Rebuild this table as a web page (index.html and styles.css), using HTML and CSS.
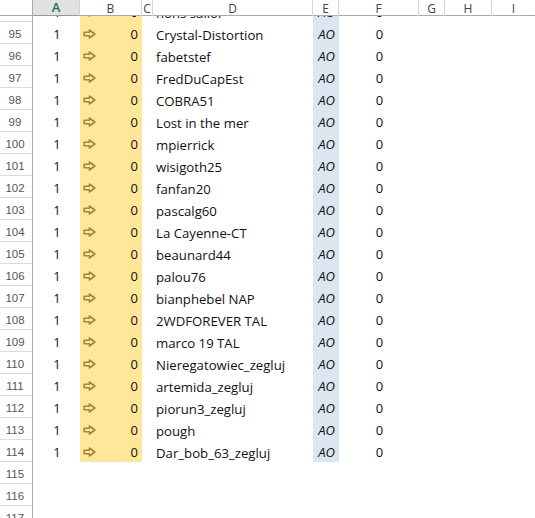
FILE: index.html
```html
<!DOCTYPE html>
<html>
<head>
<meta charset="utf-8">
<link rel="stylesheet" href="styles.css">
</head>
<body>
<svg width="0" height="0" class="defs">
  <symbol id="arr" viewBox="0 0 13 10">
    <path d="M1.2 3.2 H6.4 V1 L11.8 5 L6.4 9 V6.8 H1.2 Z" fill="none" stroke="currentColor" stroke-width="1.6" stroke-linejoin="round"/>
  </symbol>
</svg>
<div class="sheet">
  <div class="colhead">
    <div class="ch corner"></div>
    <div class="ch sel">A</div>
    <div class="ch">B</div>
    <div class="ch">C</div>
    <div class="ch">D</div>
    <div class="ch">E</div>
    <div class="ch">F</div>
    <div class="ch">G</div>
    <div class="ch">H</div>
    <div class="ch last">I</div>
  </div>
  <div class="viewport">
    <div class="rows">
      <div class="row"><div class="rh">94</div><div class="a">1</div><div class="b"><svg class="ic"><use href="#arr"/></svg><span>0</span></div><div class="c"></div><div class="d">hons sailor</div><div class="e">AO</div><div class="f">0</div></div>
      <div class="row"><div class="rh">95</div><div class="a">1</div><div class="b"><svg class="ic"><use href="#arr"/></svg><span>0</span></div><div class="c"></div><div class="d">Crystal-Distortion</div><div class="e">AO</div><div class="f">0</div></div>
      <div class="row"><div class="rh">96</div><div class="a">1</div><div class="b"><svg class="ic"><use href="#arr"/></svg><span>0</span></div><div class="c"></div><div class="d">fabetstef</div><div class="e">AO</div><div class="f">0</div></div>
      <div class="row"><div class="rh">97</div><div class="a">1</div><div class="b"><svg class="ic"><use href="#arr"/></svg><span>0</span></div><div class="c"></div><div class="d">FredDuCapEst</div><div class="e">AO</div><div class="f">0</div></div>
      <div class="row"><div class="rh">98</div><div class="a">1</div><div class="b"><svg class="ic"><use href="#arr"/></svg><span>0</span></div><div class="c"></div><div class="d">COBRA51</div><div class="e">AO</div><div class="f">0</div></div>
      <div class="row"><div class="rh">99</div><div class="a">1</div><div class="b"><svg class="ic"><use href="#arr"/></svg><span>0</span></div><div class="c"></div><div class="d">Lost in the mer</div><div class="e">AO</div><div class="f">0</div></div>
      <div class="row"><div class="rh">100</div><div class="a">1</div><div class="b"><svg class="ic"><use href="#arr"/></svg><span>0</span></div><div class="c"></div><div class="d">mpierrick</div><div class="e">AO</div><div class="f">0</div></div>
      <div class="row"><div class="rh">101</div><div class="a">1</div><div class="b"><svg class="ic"><use href="#arr"/></svg><span>0</span></div><div class="c"></div><div class="d">wisigoth25</div><div class="e">AO</div><div class="f">0</div></div>
      <div class="row"><div class="rh">102</div><div class="a">1</div><div class="b"><svg class="ic"><use href="#arr"/></svg><span>0</span></div><div class="c"></div><div class="d">fanfan20</div><div class="e">AO</div><div class="f">0</div></div>
      <div class="row"><div class="rh">103</div><div class="a">1</div><div class="b"><svg class="ic"><use href="#arr"/></svg><span>0</span></div><div class="c"></div><div class="d">pascalg60</div><div class="e">AO</div><div class="f">0</div></div>
      <div class="row"><div class="rh">104</div><div class="a">1</div><div class="b"><svg class="ic"><use href="#arr"/></svg><span>0</span></div><div class="c"></div><div class="d">La Cayenne-CT</div><div class="e">AO</div><div class="f">0</div></div>
      <div class="row"><div class="rh">105</div><div class="a">1</div><div class="b"><svg class="ic"><use href="#arr"/></svg><span>0</span></div><div class="c"></div><div class="d">beaunard44</div><div class="e">AO</div><div class="f">0</div></div>
      <div class="row"><div class="rh">106</div><div class="a">1</div><div class="b"><svg class="ic"><use href="#arr"/></svg><span>0</span></div><div class="c"></div><div class="d">palou76</div><div class="e">AO</div><div class="f">0</div></div>
      <div class="row"><div class="rh">107</div><div class="a">1</div><div class="b"><svg class="ic"><use href="#arr"/></svg><span>0</span></div><div class="c"></div><div class="d">bianphebel NAP</div><div class="e">AO</div><div class="f">0</div></div>
      <div class="row"><div class="rh">108</div><div class="a">1</div><div class="b"><svg class="ic"><use href="#arr"/></svg><span>0</span></div><div class="c"></div><div class="d">2WDFOREVER TAL</div><div class="e">AO</div><div class="f">0</div></div>
      <div class="row"><div class="rh">109</div><div class="a">1</div><div class="b"><svg class="ic"><use href="#arr"/></svg><span>0</span></div><div class="c"></div><div class="d">marco 19 TAL</div><div class="e">AO</div><div class="f">0</div></div>
      <div class="row"><div class="rh">110</div><div class="a">1</div><div class="b"><svg class="ic"><use href="#arr"/></svg><span>0</span></div><div class="c"></div><div class="d">Nieregatowiec_zegluj</div><div class="e">AO</div><div class="f">0</div></div>
      <div class="row"><div class="rh">111</div><div class="a">1</div><div class="b"><svg class="ic"><use href="#arr"/></svg><span>0</span></div><div class="c"></div><div class="d">artemida_zegluj</div><div class="e">AO</div><div class="f">0</div></div>
      <div class="row"><div class="rh">112</div><div class="a">1</div><div class="b"><svg class="ic"><use href="#arr"/></svg><span>0</span></div><div class="c"></div><div class="d">piorun3_zegluj</div><div class="e">AO</div><div class="f">0</div></div>
      <div class="row"><div class="rh">113</div><div class="a">1</div><div class="b"><svg class="ic"><use href="#arr"/></svg><span>0</span></div><div class="c"></div><div class="d">pough</div><div class="e">AO</div><div class="f">0</div></div>
      <div class="row"><div class="rh">114</div><div class="a">1</div><div class="b"><svg class="ic"><use href="#arr"/></svg><span>0</span></div><div class="c"></div><div class="d">Dar_bob_63_zegluj</div><div class="e">AO</div><div class="f">0</div></div>
      <div class="row"><div class="rh">115</div></div>
      <div class="row"><div class="rh">116</div></div>
      <div class="row"><div class="rh">117</div></div>
    </div>
  </div>
</div>
</body>
</html>
```
FILE: styles.css
```css
* { box-sizing: border-box; }
html, body { margin: 0; padding: 0; background: #fff; }
body { width: 535px; height: 518px; overflow: hidden; }
.defs { position: absolute; }
.sheet { width: 535px; height: 518px; overflow: hidden; }

.colhead {
  display: grid;
  grid-template-columns: 33px 47px 62px 11px 160px 26px 80px 26px 47px 1fr;
  height: 16px;
  border-bottom: 1px solid #ababab;
  background: #fff;
  font-family: "Open Sans", sans-serif;
  font-size: 12px;
  color: #444;
}
.ch {
  border-right: 1px solid #d4d4d4;
  display: flex;
  align-items: center;
  justify-content: center;
  line-height: 15px;
}
.ch.last { border-right: none; }
.ch.corner { border-right: 1px solid #ababab; }
.ch.sel {
  background: #e1e1e1;
  color: #217346;
  font-weight: 600;
  font-size: 13px;
  border-bottom: 1px solid #9a9a9a;
}

.viewport { height: 502px; overflow: hidden; }
.rows { margin-top: -16px; }
.row {
  display: grid;
  grid-template-columns: 33px 47px 62px 11px 160px 26px 80px 1fr;
  height: 22px;
}
.rh {
  border-right: 1px solid #ababab;
  border-bottom: 1px solid #dcdcdc;
  font-family: "Liberation Sans", sans-serif;
  font-size: 11.5px;
  color: #555;
  display: flex;
  align-items: center;
  justify-content: center;
  padding-right: 2px;
  padding-top: 2px;
}
.a, .e, .f {
  display: flex;
  align-items: center;
  justify-content: center;
  padding-top: 2px;
  font-family: "Open Sans", sans-serif;
  font-size: 13px;
  color: #111;
}
.a { padding-left: 1px; }
.f { padding-left: 1px; }
.b {
  background: #ffe699;
  display: flex;
  align-items: center;
  justify-content: space-between;
  padding: 2px 4px 0 3px;
  font-family: "Open Sans", sans-serif;
  font-size: 13px;
  color: #111;
}
.ic { width: 13px; height: 10px; color: #a8823a; }
.d {
  display: flex;
  align-items: center;
  padding: 3px 0 0 3px;
  font-family: "Open Sans", sans-serif;
  font-size: 13.2px;
  color: #111;
  white-space: nowrap;
}
.e { background: #dce6f1; font-style: italic; padding-left: 1px; }
```
